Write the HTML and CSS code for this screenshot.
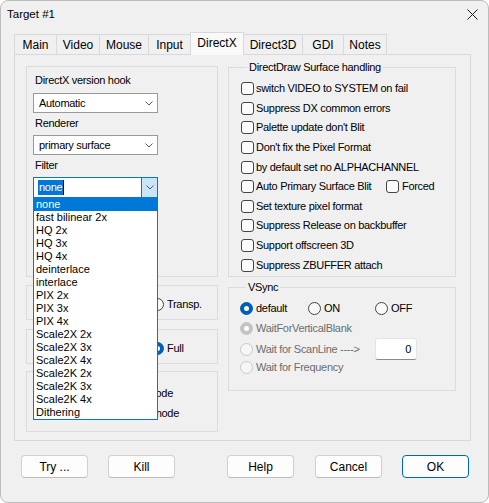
FILE: index.html
```html
<!DOCTYPE html>
<html>
<head>
<meta charset="utf-8">
<title>Target #1</title>
<link rel="stylesheet" href="styles.css">
</head>
<body>
<div class="window">
  <div class="titlebar">
    <span class="title">Target #1</span>
    <svg class="close" width="11" height="11" viewBox="0 0 11 11"><path d="M0.5 0.5L10.5 10.5M10.5 0.5L0.5 10.5" stroke="#1a1a1a" stroke-width="1"/></svg>
  </div>
  <div class="tabs">
    <div class="tab t-main">Main</div>
    <div class="tab t-video">Video</div>
    <div class="tab t-mouse">Mouse</div>
    <div class="tab t-input">Input</div>
    <div class="tab t-dx active">DirectX</div>
    <div class="tab t-d3d">Direct3D</div>
    <div class="tab t-gdi">GDI</div>
    <div class="tab t-notes">Notes</div>
  </div>
  <div class="panel">
    <div class="col-left">
      <div class="group g-dx">
        <div class="lbl">DirectX version hook</div>
        <div class="combo cmb1"><span class="ctext">Automatic</span><svg class="chev" width="8" height="5" viewBox="0 0 8 5"><path d="M0.5 0.5L4 4L7.5 0.5" fill="none" stroke="#5a5a5a" stroke-width="1"/></svg></div>
        <div class="lbl lbl2">Renderer</div>
        <div class="combo cmb2"><span class="ctext">primary surface</span><svg class="chev" width="8" height="5" viewBox="0 0 8 5"><path d="M0.5 0.5L4 4L7.5 0.5" fill="none" stroke="#5a5a5a" stroke-width="1"/></svg></div>
        <div class="lbl lbl3">Filter</div>
        <div class="combo cmb3 open">
          <span class="sel">none</span><span class="caret"></span>
          <span class="dd-btn"><svg width="8" height="5" viewBox="0 0 8 5"><path d="M0.5 0.5L4 4L7.5 0.5" fill="none" stroke="#5a5a5a" stroke-width="1"/></svg></span>
          <ul class="droplist">
            <li class="hl">none</li>
            <li>fast bilinear 2x</li>
            <li>HQ 2x</li>
            <li>HQ 3x</li>
            <li>HQ 4x</li>
            <li>deinterlace</li>
            <li>interlace</li>
            <li>PIX 2x</li>
            <li>PIX 3x</li>
            <li>PIX 4x</li>
            <li>Scale2X 2x</li>
            <li>Scale2X 3x</li>
            <li>Scale2X 4x</li>
            <li>Scale2K 2x</li>
            <li>Scale2K 3x</li>
            <li>Scale2K 4x</li>
            <li>Dithering</li>
          </ul>
        </div>
      </div>
      <div class="group g2">
        <div class="rrow">
          <span class="ritem"><span class="radio"></span></span>
          <span class="ritem"><span class="radio"></span>Transp.</span>
        </div>
      </div>
      <div class="group g3">
        <div class="rrow">
          <span class="ritem"><span class="radio"></span></span>
          <span class="ritem"><span class="radio on"></span>Full</span>
        </div>
      </div>
      <div class="group g4">
        <div class="trow tr1">mode</div>
        <div class="trow tr2">mode</div>
      </div>
    </div>
    <div class="col-right">
      <fieldset class="fs fs-dd">
        <legend>DirectDraw Surface handling</legend>
        <div class="chk"><span class="cbox"></span>switch VIDEO to SYSTEM on fail</div>
        <div class="chk"><span class="cbox"></span>Suppress DX common errors</div>
        <div class="chk"><span class="cbox"></span>Palette update don't Blit</div>
        <div class="chk"><span class="cbox"></span>Don't fix the Pixel Format</div>
        <div class="chk"><span class="cbox"></span>by default set no ALPHACHANNEL</div>
        <div class="chk"><span class="chk-wide"><span class="cbox"></span>Auto Primary Surface Blit</span><span class="cbox"></span><span class="forced">Forced</span></div>
        <div class="chk"><span class="cbox"></span>Set texture pixel format</div>
        <div class="chk"><span class="cbox"></span>Suppress Release on backbuffer</div>
        <div class="chk"><span class="cbox"></span>Support offscreen 3D</div>
        <div class="chk"><span class="cbox"></span>Suppress ZBUFFER attach</div>
      </fieldset>
      <fieldset class="fs fs-vs">
        <legend>VSync</legend>
        <div class="vrow">
          <span class="ritem"><span class="radio on"></span>default</span>
          <span class="ritem"><span class="radio"></span>ON</span>
          <span class="ritem"><span class="radio"></span>OFF</span>
        </div>
        <div class="vrow dis">
          <span class="ritem span2"><span class="radio don"></span>WaitForVerticalBlank</span>
        </div>
        <div class="vrow dis">
          <span class="ritem span2"><span class="radio doff"></span>Wait for ScanLine ----&gt;</span>
          <span class="num">0</span>
        </div>
        <div class="vrow dis">
          <span class="ritem span2"><span class="radio doff"></span>Wait for Frequency</span>
        </div>
      </fieldset>
    </div>
  </div>
  <div class="buttons">
    <div class="btn b-try">Try ...</div>
    <div class="btn b-kill">Kill</div>
    <div class="btn b-help">Help</div>
    <div class="btn b-cancel">Cancel</div>
    <div class="btn b-ok">OK</div>
  </div>
</div>
</body>
</html>
```

FILE: styles.css
```css
* { box-sizing: border-box; }
html, body { margin: 0; padding: 0; background: #ffffff; }
body {
  width: 489px;
  height: 503px;
  overflow: hidden;
  font-family: "Liberation Sans", Arial, sans-serif;
  color: #000;
}
.window {
  width: 489px;
  height: 503px;
  border: 1px solid #bcbcbc;
  border-radius: 8px;
  background: #f0f0f0;
  display: flex;
  flex-direction: column;
  overflow: hidden;
}
.titlebar {
  height: 26px;
  display: flex;
  align-items: center;
  justify-content: space-between;
  padding: 0 10px 0 6px;
  font-size: 11.5px;
}
.close { display: block; }

/* tabs */
.tabs {
  display: flex;
  align-items: flex-end;
  height: 22px;
  margin: 5px 0 0 13px;
  font-size: 12px;
}
.tab {
  height: 20px;
  border: 1px solid #d9d9d9;
  border-bottom: none;
  margin-right: -1px;
  background: #f0f0f0;
  display: flex;
  align-items: center;
  justify-content: center;
  padding-top: 1px;
  white-space: nowrap;
}
.tab.active {
  height: 23px;
  margin-bottom: -1px;
  background: #f9f9f9;
  position: relative;
  z-index: 2;
  padding-top: 0;
  padding-bottom: 2px;
}
.t-main { width: 43px; }
.t-video { width: 44px; }
.t-mouse { width: 50px; }
.t-input { width: 43px; }
.t-dx { width: 54px; }
.t-d3d { width: 60px; }
.t-gdi { width: 42px; }
.t-notes { width: 44px; }

/* panel */
.panel {
  margin-left: 13px;
  width: 457px;
  height: 387px;
  border: 1px solid #d9d9d9;
  display: flex;
  gap: 10px;
  padding: 6px 0 0 11px;
  font-size: 11px;
  line-height: 13px;
  letter-spacing: -0.3px;
}
.col-left { width: 192px; padding-top: 5px; display: flex; flex-direction: column; }
.col-right { width: 228px; display: flex; flex-direction: column; }

.group { border: 1px solid #dcdcdc; }
.g-dx {
  height: 211px;
  padding: 7px 6px 0;
  display: flex;
  flex-direction: column;
  position: relative;
  z-index: 3;
}
.lbl { height: 13px; padding-left: 2px; white-space: nowrap; }
.lbl2, .lbl3 { margin-top: 4px; }
.combo {
  width: 125px;
  height: 20px;
  border: 1px solid #9a9a9a;
  background: #fff;
  display: flex;
  align-items: center;
  padding-left: 5px;
  position: relative;
  white-space: nowrap;
}
.cmb1 { margin-top: 6px; }
.cmb2 { margin-top: 5px; }
.chev { margin-left: auto; margin-right: 4px; display: block; }
.combo.open {
  margin-top: 5px;
  height: 21px;
  border-color: #0078d7;
  padding-left: 4px;
}
.sel {
  display: inline-block;
  height: 15px;
  line-height: 15px;
  padding: 0 1px;
  background: #0078d7;
  color: #fff;
}
.caret { display: inline-block; width: 1px; height: 15px; background: #000; }
.dd-btn {
  margin-left: auto;
  width: 16px;
  height: 100%;
  border-left: 1px solid #0078d7;
  background: #cce4f7;
  display: flex;
  align-items: center;
  justify-content: center;
}
.droplist {
  position: absolute;
  left: -1px;
  top: 19px;
  width: 125px;
  margin: 0;
  padding: 0;
  list-style: none;
  border: 1px solid #0078d7;
  background: #fff;
  z-index: 5;
  letter-spacing: 0;
}
.droplist li { height: 13px; line-height: 13px; padding-left: 2px; white-space: nowrap; }
.droplist li.hl { background: #0078d7; color: #fff; }

.g2 { margin-top: 8px; height: 35px; padding: 12px 0 0 8px; }
.g3 { margin-top: 9px; height: 35px; padding: 12px 0 0 8px; }
.rrow { display: grid; grid-template-columns: 116px auto; align-items: center; height: 13px; }
.ritem { display: flex; align-items: center; white-space: nowrap; }
.g4 { margin-top: 7px; height: 61px; padding-top: 11px; }
.trow { height: 20px; display: flex; align-items: center; justify-content: flex-end; white-space: nowrap; }
.tr1 { padding-right: 44px; }
.tr2 { padding-right: 38px; }

.radio {
  width: 13px;
  height: 13px;
  border: 1px solid #444;
  border-radius: 50%;
  background: #f9f9f9;
  margin-right: 3px;
  flex: none;
  display: flex;
  align-items: center;
  justify-content: center;
}
.radio.on { background: #005fb8; border-color: #005fb8; }
.radio.on::after, .radio.don::after {
  content: "";
  width: 5px;
  height: 5px;
  border-radius: 50%;
  background: #fff;
}
.radio.don { background: #c4c4c4; border-color: #c4c4c4; }
.radio.doff { border-color: #c8c8c8; background: #f6f6f6; }

/* fieldsets */
.fs { margin: 0; border: 1px solid #dcdcdc; min-width: 0; }
.fs legend { margin-left: 6px; padding: 0 2px; line-height: 13px; height: 13px; white-space: nowrap; }
.fs-dd { padding: 5px 0 1px 12px; }
.chk { height: 19.6px; display: flex; align-items: center; white-space: nowrap; }
.cbox {
  width: 13px;
  height: 13px;
  border: 1px solid #444;
  border-radius: 3px;
  background: #fbfbfb;
  margin-right: 2px;
  flex: none;
}
.chk-wide { width: 145px; display: flex; align-items: center; }
.forced { margin-left: 1px; }

.fs-vs { margin-top: 4px; padding: 5px 0 13px 11px; }
.vrow {
  height: 19.6px;
  display: grid;
  grid-template-columns: 68px 67px auto;
  align-items: center;
}
.span2 { grid-column: 1 / 3; }
.vrow.dis { color: #6d6d6d; }
.num {
  grid-column: 3;
  width: 42px;
  height: 22px;
  background: #fff;
  border: 1px solid #e4e4e4;
  border-bottom-color: #8a8a8a;
  border-radius: 3px;
  text-align: right;
  padding-right: 5px;
  line-height: 20px;
  color: #000;
}

/* buttons */
.buttons { display: flex; margin-top: 14px; padding-left: 20px; font-size: 12px; }
.btn {
  width: 67px;
  height: 23px;
  border: 1px solid #d0d0d0;
  border-bottom-color: #bdbdbd;
  border-radius: 4px;
  background: #fdfdfd;
  display: flex;
  align-items: center;
  justify-content: center;
}
.b-kill { margin-left: 20px; }
.b-help { margin-left: 52px; }
.b-cancel { margin-left: 21px; }
.b-ok { margin-left: 20px; border-color: #0067c0; }
```
